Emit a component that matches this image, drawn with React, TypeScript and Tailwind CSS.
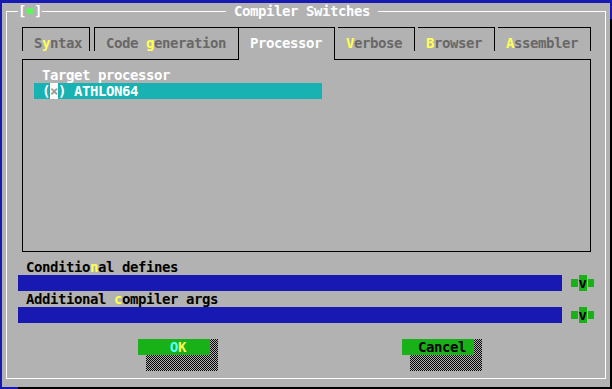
import React from "react";

// Linux console palette
// gray #b2b2b2, blue #1818b2, green #18b218, cyan #18b2b2, dgray #686868

function Hot({ children }: { children: React.ReactNode }) {
  return <span className="text-[#ffff54]">{children}</span>;
}

function HistoryBtn({ row }: { row: string }) {
  return (
    <div className={`col-[72/span_3] ${row} flex items-center`}>
      <div className="ml-[1px] h-[8px] w-[7px] bg-[#18b218]" />
      <div className="ml-[1px] flex h-[16px] w-[8px] items-center justify-center bg-[#18b218] text-black">v</div>
      <div className="ml-[1px] h-[8px] w-[7px] bg-[#18b218]" />
    </div>
  );
}

const checker =
  "bg-[image:repeating-conic-gradient(#000_0%_25%,#b2b2b2_0%_50%)] bg-[length:2px_2px]";

export default function App() {
  return (
    <div className="h-[389px] w-[612px] overflow-hidden bg-[#1818b2] pl-[2px] pt-[3px] font-['DejaVu_Sans_Mono',monospace] text-[14px] font-bold leading-[16px] tracking-[-0.43px]">
      <div className="grid h-[384px] w-[608px] grid-cols-[repeat(76,8px)] grid-rows-[repeat(24,16px)] bg-[#b2b2b2] shadow-[16px_16px_0_#000] whitespace-pre">
        {/* window frame */}
        <div className="col-[1/span_76] row-[1/span_24] mb-[8px] ml-[4px] mr-[4px] mt-[8px] border border-white" />
        <div className="col-[3/span_3] row-[1] flex bg-[#b2b2b2] text-white">
          <span className="w-[8px]">[</span>
          <span className="flex w-[8px] items-center justify-center">
            <svg width="8" height="8" viewBox="0 0 8 8">
              <path d="M1 1L7 7M7 1L1 7M0 4H8M4 1V7" stroke="#54ff54" strokeWidth="1.6" />
            </svg>
          </span>
          <span className="w-[8px]">]</span>
        </div>
        <div className="col-[29/span_19] row-[1] bg-[#b2b2b2] text-white"> Compiler Switches </div>

        {/* tab boxes */}
        <div className="col-[3/span_9] row-[2/span_2] ml-[4px] mt-[8px] border-l border-r border-t border-black" />
        <div className="col-[12/span_19] row-[2/span_2] ml-[4px] mr-[4px] mt-[8px] border-l border-t border-black" />
        <div className="col-[3/span_72] row-[4/span_13] mb-[7px] ml-[4px] mr-[3px] mt-[8px] border border-black" />
        <div className="col-[30/span_13] row-[2/span_3] mb-[7px] ml-[4px] mr-[3px] mt-[8px] border-l border-r border-t border-black bg-[#b2b2b2]" />
        <div className="col-[43/span_10] row-[2/span_2] mr-[3px] mt-[8px] border-r border-t border-black" />
        <div className="col-[53/span_10] row-[2/span_2] mr-[3px] mt-[8px] border-r border-t border-black" />
        <div className="col-[63/span_12] row-[2/span_2] mr-[3px] mt-[8px] border-r border-t border-black" />

        {/* tab labels */}
        <div className="col-[5/span_6] row-[3] text-[#686868]">S<Hot>y</Hot>ntax</div>
        <div className="col-[14/span_15] row-[3] text-[#686868]">Code <Hot>g</Hot>eneration</div>
        <div className="col-[32/span_9] row-[3] text-white">Processor</div>
        <div className="col-[44/span_7] row-[3] text-[#686868]"><Hot>V</Hot>erbose</div>
        <div className="col-[54/span_7] row-[3] text-[#686868]"><Hot>B</Hot>rowser</div>
        <div className="col-[64/span_9] row-[3] text-[#686868]"><Hot>A</Hot>ssembler</div>

        {/* processor page */}
        <div className="col-[6/span_16] row-[5] text-white">Target processor</div>
        <div className="col-[5/span_36] row-[6] flex bg-[#18b2b2] pl-[8px] text-white">
          <span className="w-[8px]">(</span>
          <span className="w-[8px] bg-white text-center text-[#9a9a9a]">×</span>
          <span>) ATHLON64</span>
        </div>

        {/* defines / args */}
        <div className="col-[4/span_19] row-[17] text-black">Conditio<Hot>n</Hot>al defines</div>
        <div className="col-[3/span_68] row-[18] bg-[#1818b2]" />
        <HistoryBtn row="row-[18]" />
        <div className="col-[4/span_24] row-[19] text-black">Additional <Hot>c</Hot>ompiler args</div>
        <div className="col-[3/span_68] row-[20] bg-[#1818b2]" />
        <HistoryBtn row="row-[20]" />

        {/* buttons */}
        <div className={`col-[19/span_9] row-[22/span_2] ${checker}`} />
        <div className="col-[18/span_9] row-[22] bg-[#18b218] pl-[32px]">
          <span className="text-[#54ffff]">O</span>
          <span className="text-[#ffff54]">K</span>
        </div>
        <div className={`col-[52/span_9] row-[22/span_2] ${checker}`} />
        <div className="col-[51/span_9] row-[22] bg-[#18b218] pl-[16px] text-black">Cancel</div>
      </div>
    </div>
  );
}
